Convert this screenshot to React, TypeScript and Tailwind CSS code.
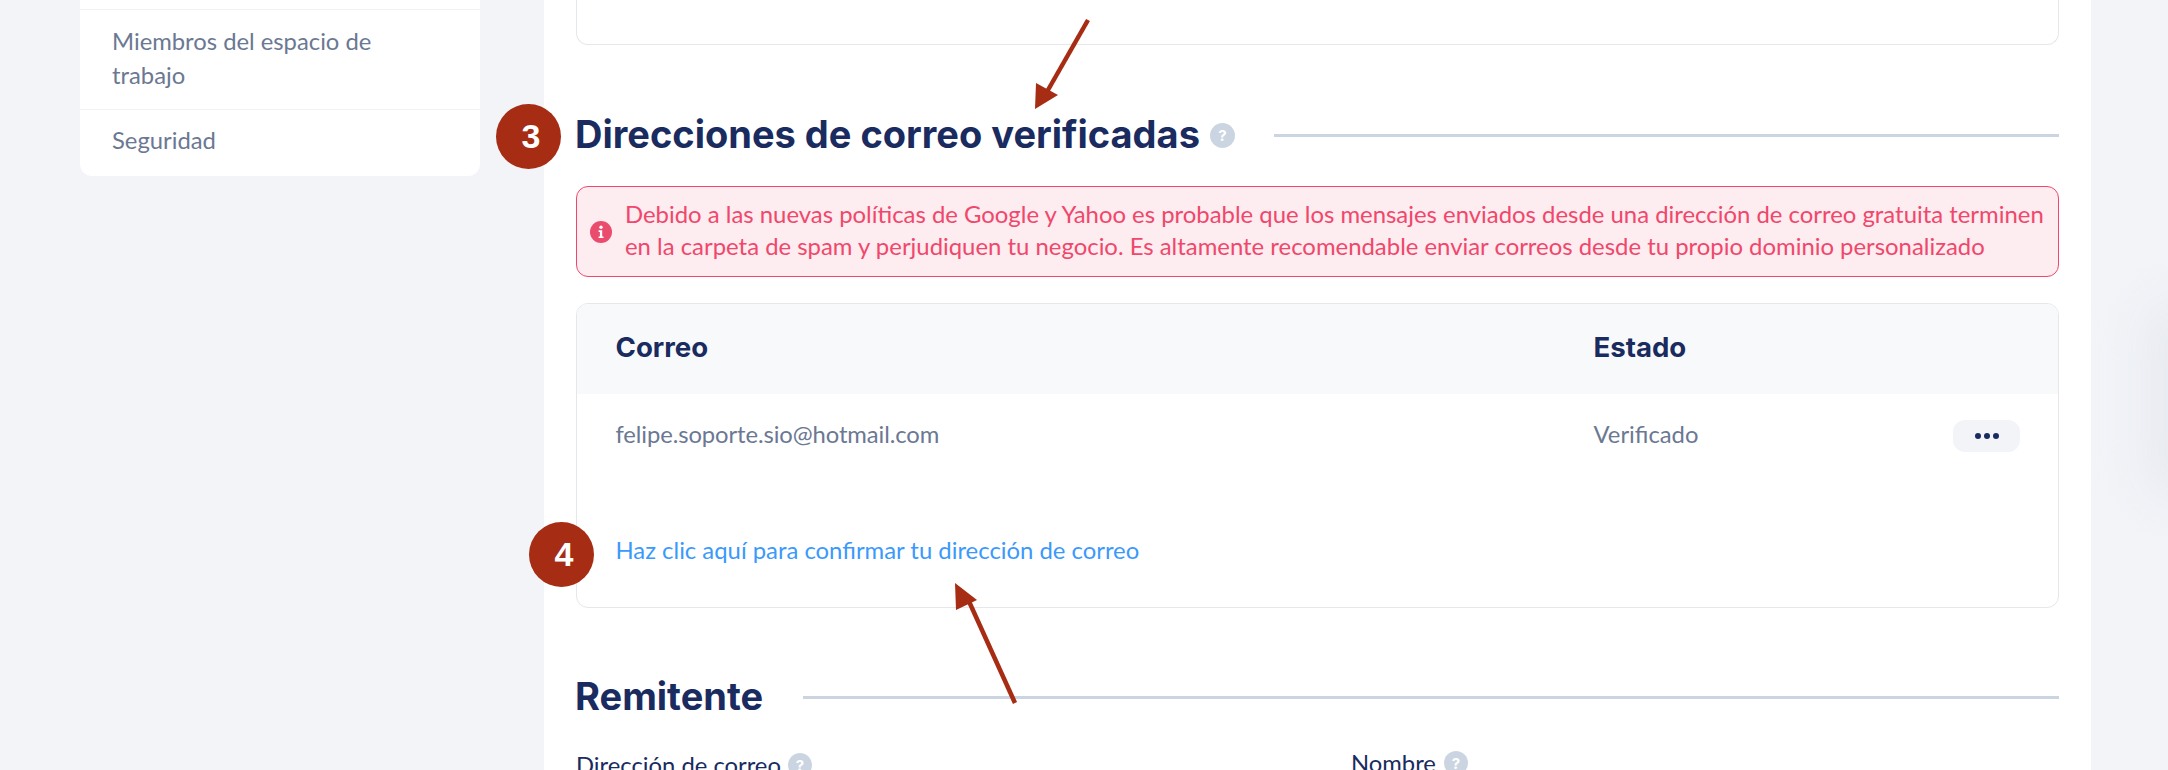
function HelpDot({ className = "" }: { className?: string }) {
  return (
    <span className={`inline-flex items-center justify-center rounded-full bg-[#cbd5e1] text-white font-bold text-[15px] leading-none font-['Inter',sans-serif] ${className}`}>
      ?
    </span>
  );
}

function SectionTitle({ title, help }: { title: string; help?: boolean }) {
  return (
    <div className="flex items-center h-[54px]">
      <h2 className="-ml-[1px] -mt-[2px] font-['Inter',sans-serif] font-bold text-[38px] leading-[54px] text-[#1a2b5f] whitespace-nowrap">
        {title}
      </h2>
      {help && <HelpDot className="w-[25px] h-[25px] ml-[10px]" />}
      <div className={`h-[3px] flex-1 bg-[#cbd5e1] ${help ? "ml-[39px]" : "ml-[40px]"}`}></div>
    </div>
  );
}

function Badge({ n, className }: { n: string; className: string }) {
  return (
    <div className={`absolute w-[65px] h-[65px] pl-[5px] rounded-full bg-[#a62c14] text-white flex items-center justify-center font-['Liberation_Sans',sans-serif] font-bold text-[34px] ${className}`}>
      {n}
    </div>
  );
}

export default function App() {
  return (
    <div className="relative h-[770px] w-full overflow-hidden flex bg-[#f2f4f8] font-['Lato',sans-serif]">
      <aside className="w-[544px] shrink-0 pl-[80px]">
        <div className="w-[400px] bg-white rounded-b-xl text-[23.8px] text-[#6b7893]">
          <div className="h-[10px] border-b border-[#f0f2f5]"></div>
          <div className="px-[32px] pt-[14px] pb-[16px] leading-[34px] h-[100px] border-b border-[#f0f2f5] whitespace-nowrap">
            Miembros del espacio de
            <br />
            trabajo
          </div>
          <div className="px-[32px] h-[66px] pt-[13px] leading-[34px]">Seguridad</div>
        </div>
      </aside>

      <main className="w-[1547px] shrink-0 bg-white px-[32px]">
        <div className="h-[45px] border border-t-0 border-[#e5e7eb] rounded-b-xl"></div>

        <div className="mt-[63px]">
          <SectionTitle title="Direcciones de correo verificadas" help />
        </div>

        <div className="mt-[24px] h-[91px] flex items-center rounded-xl border border-[#f0476b] bg-[#fdecf0] pl-[13px] text-[#f0476b]">
          <svg viewBox="0 0 22 22" className="w-[22px] h-[22px] shrink-0">
            <circle cx="11" cy="11" r="11" fill="#ea4c6e" />
            <circle cx="11" cy="6.2" r="1.7" fill="#fff" />
            <path d="M8.6 9.2h3.6v6.2h1.3v1.7H8.6v-1.7h1.3v-4.5H8.6z" fill="#fff" />
          </svg>
          <p className="ml-[13px] -mt-[3px] text-[23.9px] leading-[32px] whitespace-nowrap">
            Debido a las nuevas políticas de Google y Yahoo es probable que los mensajes enviados desde una dirección de correo gratuita terminen
            <br />
            en la carpeta de spam y perjudiquen tu negocio. Es altamente recomendable enviar correos desde tu propio dominio personalizado
          </p>
        </div>

        <div className="mt-[26px] h-[305px] rounded-xl border border-[#e5e7eb] overflow-hidden">
          <div className="h-[90px] bg-[#f8f9fb] grid grid-cols-[978px_1fr] items-center px-[38.5px] font-['Inter',sans-serif] font-bold text-[27.6px] text-[#1a2b5f]">
            <div className="-mt-[3px]">Correo</div>
            <div className="-mt-[3px]">Estado</div>
          </div>
          <div className="grid grid-cols-[978px_1fr_67px] pl-[38.5px] pr-[38px] pt-[25px] text-[23.8px] text-[#6b7893]">
            <div className="leading-[30px] tracking-[-0.09px]">felipe.soporte.sio@hotmail.com</div>
            <div className="leading-[30px]">Verificado</div>
            <button className="h-[32px] mt-[1px] rounded-xl bg-[#f2f4f8] flex items-center justify-center gap-[3px]">
              <span className="w-[6px] h-[6px] rounded-full bg-[#1a2b5f]"></span>
              <span className="w-[6px] h-[6px] rounded-full bg-[#1a2b5f]"></span>
              <span className="w-[6px] h-[6px] rounded-full bg-[#1a2b5f]"></span>
            </button>
          </div>
          <div className="mt-[82px] pl-[38.5px] text-[23.87px] leading-[32px] text-[#3b99fc]">
            Haz clic aquí para confirmar tu dirección de correo
          </div>
        </div>

        <div className="mt-[62px]">
          <SectionTitle title="Remitente" />
        </div>

        <div className="grid grid-cols-[775px_1fr] text-[23.8px] text-[#1a2b5f] leading-[30px] mt-[22px]">
          <div className="flex items-center gap-[7px] pt-[4px]">
            <span>Dirección de correo</span>
            <HelpDot className="w-[24px] h-[24px]" />
          </div>
          <div className="flex items-center gap-[8px]">
            <span>Nombre</span>
            <HelpDot className="w-[24px] h-[24px]" />
          </div>
        </div>
      </main>

      <div className="absolute right-[-40px] top-[300px] w-[60px] h-[200px] rounded-full bg-[#e6e9ef] blur-[24px]"></div>

      <Badge n="3" className="left-[496px] top-[104px]" />
      <Badge n="4" className="left-[529px] top-[522px]" />

      {/* flechas de la anotación */}
      <svg className="absolute left-0 top-0 pointer-events-none" width="2168" height="770" fill="none">
        <path d="M1088 20 L1044 97" stroke="#a62c14" strokeWidth="4.5" />
        <path d="M1035 109 L1058 95 L1036 83 Z" fill="#a62c14" />
        <path d="M1015 703 L967 597" stroke="#a62c14" strokeWidth="4.5" />
        <path d="M955 583 L977 600 L956 610 Z" fill="#a62c14" />
      </svg>
    </div>
  );
}
